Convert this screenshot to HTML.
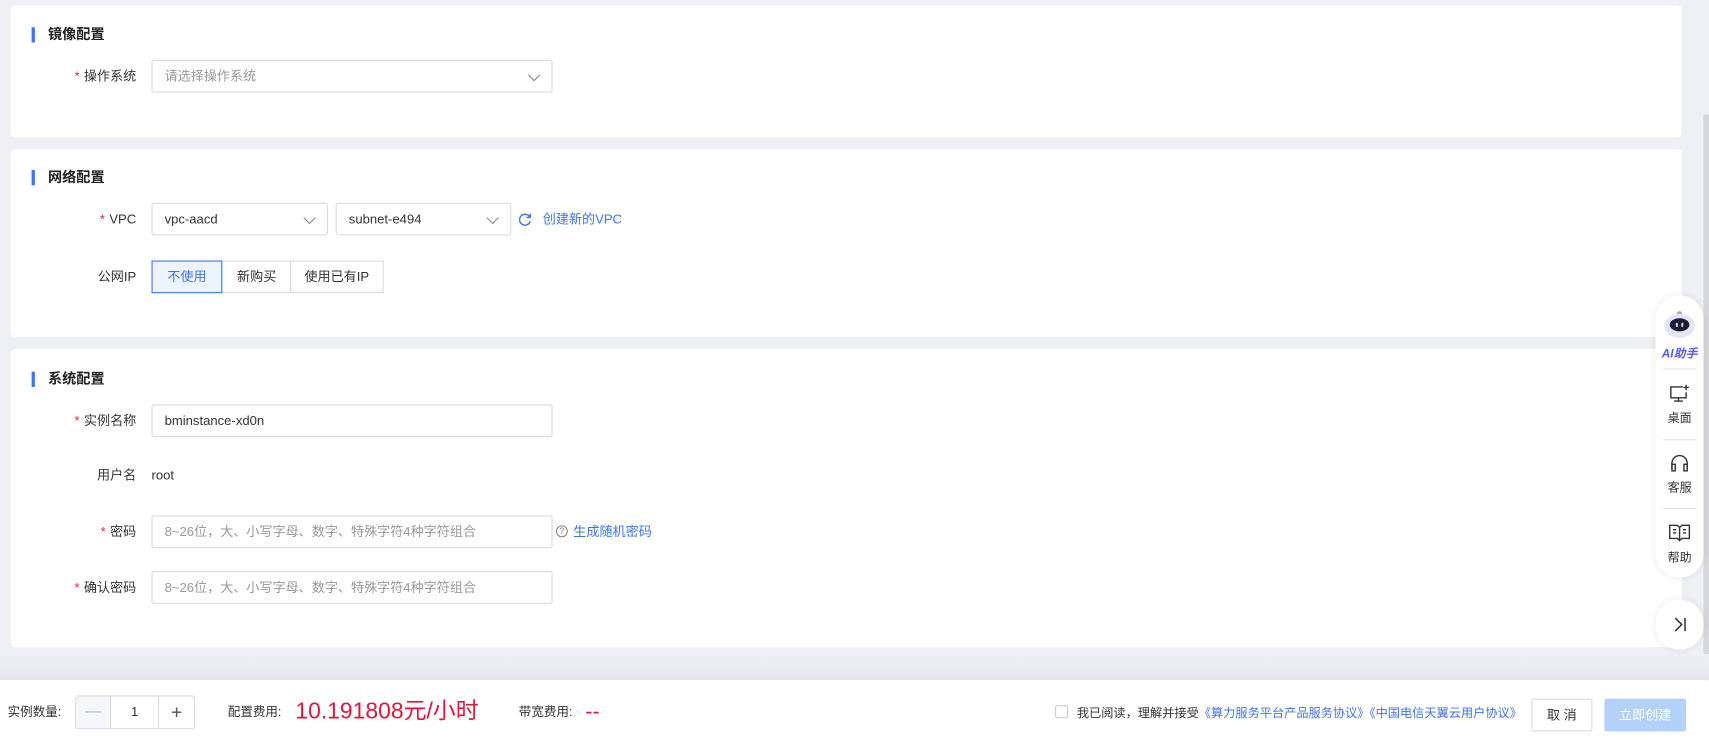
<!DOCTYPE html>
<html><head><meta charset="utf-8"><style>
html,body{margin:0;padding:0;width:1709px;height:740px;overflow:hidden;background:#eef0f4}
#w{position:absolute;left:0;top:0;width:1568px;height:679px;transform:scale(1.08992);transform-origin:0 0;background:#eef0f4;font-family:"Liberation Sans","Noto Sans CJK SC",sans-serif;font-size:12px;color:#333}
.a{position:absolute;white-space:nowrap}
.card{position:absolute;left:10px;width:1533px;background:#fff;border-radius:4px}
.tt{position:absolute;left:19px;font-size:13px;font-weight:bold;color:#222;line-height:14px}
.tt:before{content:"";position:absolute;left:-15px;top:0;width:3px;height:14px;background:#3d73f5}
.lb{position:absolute;right:1443px;width:120px;text-align:right;line-height:30px;color:#333;white-space:nowrap}
.lb i{color:#f5222d;font-style:normal;margin-right:4px}
.in{position:absolute;height:28px;border:1px solid #d9dce3;border-radius:2px;line-height:28px;padding-left:11px;box-sizing:content-box;color:#333;white-space:nowrap}
.ph{color:#999}
.ar{position:absolute;right:12px;top:9px;width:7px;height:7px;border-right:1px solid #888;border-bottom:1px solid #888;transform:rotate(45deg)}
.rb{position:absolute;top:239px;height:28px;border:1px solid #d9dce3;line-height:28px;text-align:center;background:#fff}
.lk{color:#3d73f5}
.side{position:absolute;left:1519px;width:44px;background:#fff;box-shadow:0 0 8px rgba(0,0,0,.08)}
.si{position:absolute;left:1519px;width:44px;text-align:center;font-size:11px;color:#333}
.hr{position:absolute;left:1526px;width:30px;height:1px;background:#e3e3e3}
</style></head><body><div id="w">
<div class="card" style="top:5px;height:121px"></div>
<div class="card" style="top:137px;height:172px"></div>
<div class="card" style="top:320px;height:274px"></div>

<div class="tt" style="left:44px;top:25px">镜像配置</div>
<div class="lb" style="top:55px"><i>*</i>操作系统</div>
<div class="in" style="left:139px;top:55px;width:355px"><span class="ph">请选择操作系统</span><span class="ar"></span></div>

<div class="tt" style="left:44px;top:156px">网络配置</div>
<div class="lb" style="top:186px"><i>*</i>VPC</div>
<div class="in" style="left:139px;top:186px;width:149px">vpc-aacd<span class="ar"></span></div>
<div class="in" style="left:308px;top:186px;width:148px">subnet-e494<span class="ar"></span></div>
<svg class="a" style="left:475px;top:195px" width="13" height="13" viewBox="0 0 13 13"><path d="M11 4A5 5 0 1 0 11.5 8" fill="none" stroke="#3d73f5" stroke-width="1.3"/><path d="M11.5 1v3.5H8" fill="none" stroke="#3d73f5" stroke-width="1.3"/></svg>
<div class="a lk" style="left:498px;top:186px;line-height:30px">创建新的VPC</div>
<div class="lb" style="top:239px">公网IP</div>
<div class="rb" style="left:139px;width:63px;border-color:#3d73f5;background:#eef4ff;color:#3d73f5;z-index:2">不使用</div>
<div class="rb" style="left:203px;width:63px">新购买</div>
<div class="rb" style="left:266px;width:84px">使用已有IP</div>

<div class="tt" style="left:44px;top:341px">系统配置</div>
<div class="lb" style="top:371px"><i>*</i>实例名称</div>
<div class="in" style="left:139px;top:371px;width:355px">bminstance-xd0n</div>
<div class="lb" style="top:421px">用户名</div>
<div class="a" style="left:139px;top:421px;line-height:30px">root</div>
<div class="lb" style="top:473px"><i>*</i>密码</div>
<div class="in" style="left:139px;top:473px;width:355px"><span class="ph">8~26位，大、小写字母、数字、特殊字符4种字符组合</span></div>
<div class="a" style="left:510px;top:482px;width:9px;height:9px;border:1px solid #888;border-radius:50%;font-size:8px;line-height:9px;text-align:center;color:#888">?</div>
<div class="a lk" style="left:526px;top:473px;line-height:30px">生成随机密码</div>
<div class="lb" style="top:524px"><i>*</i>确认密码</div>
<div class="in" style="left:139px;top:524px;width:355px"><span class="ph">8~26位，大、小写字母、数字、特殊字符4种字符组合</span></div>

<div class="a" style="left:1563px;top:105px;width:5px;height:520px;background:#d6d7db"></div>

<div class="side" style="top:271px;height:259px;border-radius:22px"></div>
<svg class="a" style="left:1525px;top:284px" width="32" height="28" viewBox="0 0 32 28"><circle cx="16" cy="4" r="2.5" fill="#aab"/><ellipse cx="16" cy="15" rx="14" ry="11" fill="#e4e4fb"/><ellipse cx="16" cy="14" rx="9" ry="6" fill="#1c1c33"/><rect x="12.5" y="12" width="2" height="4" rx="1" fill="#ccd"/><rect x="17.5" y="12" width="2" height="4" rx="1" fill="#ccd"/></svg>
<div class="si" style="top:316px;font-weight:bold;font-style:italic;color:#5a5df0;font-size:11px">AI助手</div>
<div class="hr" style="top:338px"></div>
<svg class="a" style="left:1531px;top:352px" width="20" height="18" viewBox="0 0 20 18"><path d="M13 3H2v10h14V8M5 16h8M9 13v3M16 1v5M13.5 3.5h5" fill="none" stroke="#333" stroke-width="1.3"/></svg>
<div class="si" style="top:375px">桌面</div>
<div class="hr" style="top:403px"></div>
<svg class="a" style="left:1532px;top:416px" width="18" height="18" viewBox="0 0 18 18"><path d="M2 14V9a7 7 0 0 1 14 0v5" fill="none" stroke="#333" stroke-width="1.3"/><rect x="2" y="10" width="3" height="6" fill="none" stroke="#333" stroke-width="1.3"/><rect x="13" y="10" width="3" height="6" fill="none" stroke="#333" stroke-width="1.3"/></svg>
<div class="si" style="top:439px">客服</div>
<div class="hr" style="top:466px"></div>
<svg class="a" style="left:1531px;top:480px" width="20" height="17" viewBox="0 0 20 17"><path d="M1 2h7l2 2 2-2h7v12h-7l-2 2-2-2H1z M10 4v12 M4 6h3M4 9h3M13 6h3M13 9h3" fill="none" stroke="#333" stroke-width="1.3"/></svg>
<div class="si" style="top:503px">帮助</div>

<div class="side" style="top:550px;height:46px;border-radius:23px"></div>
<svg class="a" style="left:1533px;top:565px" width="16" height="16" viewBox="0 0 16 16"><path d="M4 2l6 6-6 6M13 2v12" fill="none" stroke="#333" stroke-width="1.4"/></svg>

<div class="a" style="left:0;top:600px;width:1568px;height:24px;background:linear-gradient(#eef0f4,#e6e7eb)"></div>
<div class="a" style="left:0;top:624px;width:1568px;height:55px;background:#fff"></div>
<div class="a" style="left:7px;top:645px;font-size:11.5px">实例数量:</div>
<div class="a" style="left:69px;top:638px;width:108px;height:29px;border:1px solid #d9dce3;border-radius:3px"></div>
<div class="a" style="left:70px;top:639px;width:31px;height:29px;background:#f5f6f8;border-right:1px solid #d9dce3;color:#bbb;text-align:center;line-height:28px;font-size:15px">—</div>
<div class="a" style="left:102px;top:639px;width:43px;line-height:29px;text-align:center">1</div>
<div class="a" style="left:145px;top:639px;width:32px;height:29px;border-left:1px solid #d9dce3;text-align:center;line-height:28px;font-size:18px;color:#555">+</div>
<div class="a" style="left:209px;top:645px;font-size:11.5px">配置费用:</div>
<div class="a" style="left:271px;top:640px;font-size:21px;color:#e0173b;line-height:26px">10.191808元/小时</div>
<div class="a" style="left:476px;top:645px;font-size:11.5px">带宽费用:</div>
<div class="a" style="left:537px;top:640px;font-size:20px;color:#e0173b;line-height:26px">--</div>
<div class="a" style="left:968px;top:647px;width:10px;height:10px;border:1px solid #ccc;border-radius:2px"></div>
<div class="a" style="left:988px;top:646px;font-size:11.2px">我已阅读，理解并接受<span class="lk">《算力服务平台产品服务协议》《中国电信天翼云用户协议》</span></div>
<div class="a" style="left:1405px;top:641px;width:54px;height:28px;border:1px solid #d9dce3;border-radius:2px;text-align:center;line-height:28px">取 消</div>
<div class="a" style="left:1472px;top:641px;width:75px;height:30px;background:#b3d1fb;border-radius:2px;text-align:center;line-height:30px;color:#fff">立即创建</div>
</div></body></html>
